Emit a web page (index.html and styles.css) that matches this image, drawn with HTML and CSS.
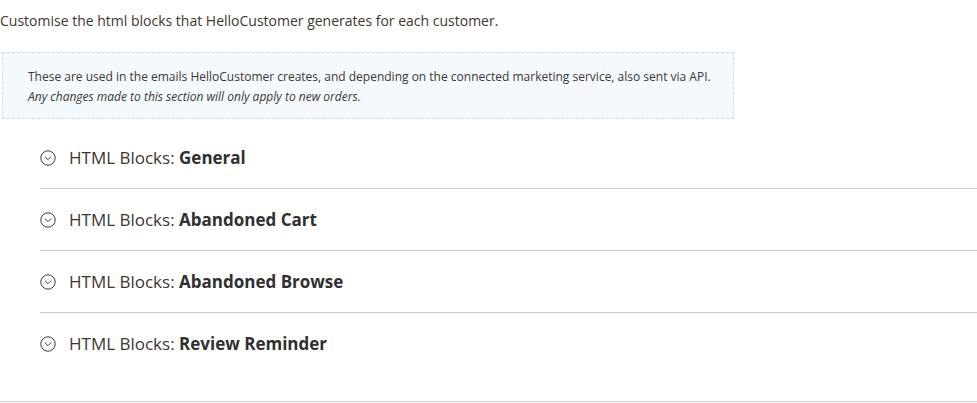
FILE: index.html
```html
<!DOCTYPE html>
<html>
<head>
<meta charset="utf-8">
<link rel="stylesheet" href="styles.css">
</head>
<body>
<div class="page">
  <p class="intro">Customise the html blocks that HelloCustomer generates for each customer.</p>
  <div class="notice">
    <p>These are used in the emails HelloCustomer creates, and depending on the connected marketing service, also sent via API.</p>
    <p class="em">Any changes made to this section will only apply to new orders.</p>
  </div>
  <div class="section">
    <ul class="blocks">
      <li class="block"><svg class="ico" viewBox="0 0 16 16"><circle cx="8" cy="8" r="7.2"/><path d="M4.9 6.6 L8 9.7 L11.1 6.6"/></svg><span class="title"><span class="label">HTML Blocks:</span> <strong>General</strong></span></li>
      <li class="block"><svg class="ico" viewBox="0 0 16 16"><circle cx="8" cy="8" r="7.2"/><path d="M4.9 6.6 L8 9.7 L11.1 6.6"/></svg><span class="title"><span class="label">HTML Blocks:</span> <strong>Abandoned Cart</strong></span></li>
      <li class="block"><svg class="ico" viewBox="0 0 16 16"><circle cx="8" cy="8" r="7.2"/><path d="M4.9 6.6 L8 9.7 L11.1 6.6"/></svg><span class="title"><span class="label">HTML Blocks:</span> <strong>Abandoned Browse</strong></span></li>
      <li class="block"><svg class="ico" viewBox="0 0 16 16"><circle cx="8" cy="8" r="7.2"/><path d="M4.9 6.6 L8 9.7 L11.1 6.6"/></svg><span class="title"><span class="label">HTML Blocks:</span> <strong>Review Reminder</strong></span></li>
    </ul>
  </div>
</div>
</body>
</html>
```
FILE: styles.css
```css
html, body {
  margin: 0;
  padding: 0;
  background: #fff;
}
body {
  font-family: "Open Sans", "Liberation Sans", sans-serif;
  color: #41362f;
}
.page {
  width: 977px;
}
.intro {
  margin: 0;
  padding: 11px 0 0 0;
  font-size: 14px;
  line-height: 20px;
}
.notice {
  margin: 21px 0 0 2px;
  width: 732px;
  height: 67px;
  box-sizing: border-box;
  border: 1px dashed #d4d8db;
  background: #f3f9fd;
  padding: 14px 0 0 25px;
}
.notice p {
  margin: 0;
  font-size: 12px;
  line-height: 20px;
  color: #41362f;
}
.notice p.em {
  font-style: italic;
}
.section {
  margin-top: 8px;
  height: 274px;
  border-bottom: 1px solid #cccccc;
}
.blocks {
  list-style: none;
  margin: 0;
  padding: 0 0 0 40px;
}
.block {
  height: 61px;
  display: flex;
  align-items: center;
  font-size: 17px;
  color: #41362f;
  border-bottom: 1px solid #cccccc;
}
.block:last-child {
  border-bottom: none;
}
.ico {
  width: 16px;
  height: 16px;
  margin-right: 13px;
  fill: none;
  stroke: #41362f;
  stroke-width: 1;
  flex: none;
}
.label {
  font-weight: 400;
}
.block strong {
  font-weight: 700;
  color: #303030;
}
```
